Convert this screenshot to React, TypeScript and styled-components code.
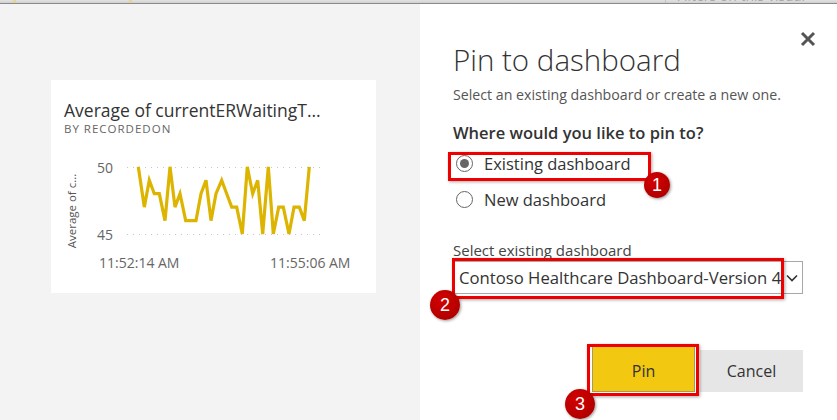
import React from "react";
import styled, { createGlobalStyle } from "styled-components";

const Global = createGlobalStyle`
  html, body { margin: 0; padding: 0; }
  body {
    width: 837px; height: 420px; overflow: hidden;
    font-family: "Open Sans", "Noto Sans", sans-serif;
    background: #f3f3f3;
  }
`;

const Page = styled.div`
  width: 837px;
  height: 420px;
  display: flex;
  flex-direction: column;
  background: #f3f3f3;
`;

const TopStrip = styled.div`
  height: 3px;
  flex: none;
  display: flex;
  background: linear-gradient(#e2e2e2, #cfcfcf);
  border-bottom: 1px solid #8a8a8a;
  overflow: hidden;
`;

const StripMark = styled.div<{ $w: number }>`
  width: ${(p) => p.$w}px;
  flex: none;
  border-left: 3px solid #e3d3a2;
`;

const StripText = styled.div`
  margin-left: auto;
  margin-right: 32px;
  padding-left: 11px;
  border-left: 1px solid #c4c4c4;
  font-size: 14px;
  line-height: 14px;
  margin-top: -11px;
  color: #a8a8a8;
  white-space: nowrap;
`;

const Body = styled.div`
  flex: 1;
  display: flex;
  min-height: 0;
`;

const LeftPane = styled.div`
  width: 420px;
  flex: none;
  padding: 76px 0 0 51px;
  box-sizing: border-box;
`;

const Card = styled.div`
  width: 325px;
  height: 213px;
  background: #fff;
  display: flex;
  flex-direction: column;
`;

const CardHeader = styled.div`
  padding: 19px 13px 0;
  height: 70px;
  box-sizing: border-box;
`;

const CardTitle = styled.div`
  font-size: 17.5px;
  line-height: 22px;
  color: #333;
  white-space: nowrap;
`;

const CardSub = styled.div`
  font-size: 11.5px;
  line-height: 16px;
  letter-spacing: 1px;
  color: #666;
`;

const ChartSvg = styled.svg`
  display: block;
  font-family: "Open Sans", "Noto Sans", sans-serif;
`;

const Dialog = styled.div`
  flex: 1;
  background: #fff;
  position: relative;
  display: flex;
  flex-direction: column;
  padding: 0 34px 0 33px;
`;

const CloseButton = styled.button`
  position: absolute;
  top: 27px;
  right: 21px;
  width: 16px;
  height: 16px;
  padding: 0;
  border: none;
  background: none;
  display: flex;
`;

const Title = styled.h1`
  margin: 36px 0 0;
  font-size: 29.5px;
  line-height: 40px;
  font-weight: 300;
  color: #333;
`;

const Subtitle = styled.p`
  margin: 6px 0 0;
  font-size: 14.2px;
  line-height: 18px;
  color: #555;
`;

const Question = styled.div`
  margin: 18px 0 0;
  font-size: 16.5px;
  line-height: 22px;
  font-weight: 600;
  color: #333;
`;

const RadioGroup = styled.div`
  display: flex;
  flex-direction: column;
  margin-top: 1px;
`;

const RadioRow = styled.label`
  display: flex;
  align-items: center;
  height: 36px;
  gap: 11px;
  padding-left: 3px;
  font-size: 16.5px;
  color: #333;
`;

const RadioCircle = styled.span<{ $checked?: boolean }>`
  width: 17px;
  height: 17px;
  box-sizing: border-box;
  border-radius: 50%;
  border: 1.5px solid #666;
  display: flex;
  align-items: center;
  justify-content: center;
  &::after {
    content: "";
    width: 9px;
    height: 9px;
    border-radius: 50%;
    background: ${(p) => (p.$checked ? "#666" : "transparent")};
  }
`;

const FieldLabel = styled.div`
  margin-top: 24px;
  font-size: 15px;
  line-height: 18px;
  color: #444;
`;

const SelectBox = styled.div`
  margin-top: 2px;
  height: 33px;
  box-sizing: border-box;
  border: 1px solid #a8a8a8;
  display: flex;
  align-items: center;
  padding: 0 4px 0 5px;
  font-size: 16.7px;
  color: #333;
  white-space: nowrap;
`;

const SelectText = styled.span`
  flex: 1;
`;

const ButtonRow = styled.div`
  display: flex;
  justify-content: flex-end;
  align-items: flex-end;
  gap: 5px;
  margin-top: 52px;
`;

const Button = styled.button<{ $primary?: boolean }>`
  width: 103px;
  height: ${(p) => (p.$primary ? 46 : 42)}px;
  border: none;
  box-shadow: ${(p) => (p.$primary ? "inset 0 0 0 1px #a99a5a" : "none")};
  background: ${(p) => (p.$primary ? "#f2c811" : "#e6e6e6")};
  color: #333;
  font-family: "Open Sans", "Noto Sans", sans-serif;
  font-size: 16px;
  padding: ${(p) => (p.$primary ? "4px 0 0" : "0")};
`;

const Highlight = styled.div<{ $l: number; $t: number; $w: number; $h: number }>`
  position: absolute;
  left: ${(p) => p.$l}px;
  top: ${(p) => p.$t}px;
  width: ${(p) => p.$w}px;
  height: ${(p) => p.$h}px;
  box-sizing: border-box;
  border: 3px solid #ee0000;
  box-shadow: 1px 1px 3px rgba(0, 0, 0, 0.35);
  pointer-events: none;
`;

const Badge = styled.div<{ $x: number; $y: number; $r: number }>`
  position: absolute;
  left: ${(p) => p.$x - p.$r}px;
  top: ${(p) => p.$y - p.$r}px;
  width: ${(p) => p.$r * 2}px;
  height: ${(p) => p.$r * 2}px;
  border-radius: 50%;
  background: radial-gradient(circle at 40% 35%, #d40000, #a30000);
  box-shadow: 1px 1px 3px rgba(0, 0, 0, 0.4);
  color: #fff;
  font-family: "Liberation Sans", Arial, sans-serif;
  font-size: 18px;
  display: flex;
  align-items: center;
  justify-content: center;
`;

const values = [50, 47, 49, 48, 48, 46, 50, 47, 48, 46, 46, 46, 48, 49, 46, 48, 49, 48, 47, 47, 45, 50, 48, 49, 45, 50, 45, 47, 47, 45, 47, 47, 46, 50];
const xs = [145, 163, 178, 193, 208, 225, 240, 255, 270, 287, 303, 318, 333, 348, 363, 378, 395, 410, 425, 440, 457, 472, 488, 503, 518, 535, 550, 566, 580, 597, 612, 628, 643, 658];

const points = values
  .map((v, i) => `${(39 + xs[i] / 3).toFixed(1)},${(16.8 + (50 - v) * 13.45).toFixed(1)}`)
  .join(" ");

const Chart = () => (
  <ChartSvg width={325} height={143} viewBox="0 0 325 143">
    <text transform="translate(25 61) rotate(-90)" textAnchor="middle" fontSize="11.5" fill="#555">
      Average of c...
    </text>
    <text x="62" y="22.5" textAnchor="end" fontSize="14" fill="#666">50</text>
    <text x="62" y="89.5" textAnchor="end" fontSize="14" fill="#666">45</text>
    <line x1="76" y1="17.5" x2="272" y2="17.5" stroke="#c8c8c8" strokeDasharray="1 5" />
    <line x1="76" y1="84.5" x2="272" y2="84.5" stroke="#c8c8c8" strokeDasharray="1 5" />
    <polyline points={points} fill="none" stroke="#ddb400" strokeWidth="3.2" strokeLinejoin="miter" />
    <text x="48" y="118" fontSize="14" fill="#666">11:52:14 AM</text>
    <text x="219" y="118" fontSize="14" fill="#666">11:55:06 AM</text>
  </ChartSvg>
);

export default function App() {
  return (
    <Page>
      <Global />
      <TopStrip>
        <StripMark $w={113} style={{ marginLeft: 13 }} />
        <StripMark $w={40} />
        <StripText>Filters on this visual</StripText>
      </TopStrip>
      <Body>
        <LeftPane>
          <Card>
            <CardHeader>
              <CardTitle>Average of currentERWaitingT...</CardTitle>
              <CardSub>BY RECORDEDON</CardSub>
            </CardHeader>
            <Chart />
          </Card>
        </LeftPane>
        <Dialog>
          <CloseButton aria-label="Close">
            <svg width="16" height="16" viewBox="0 0 16 16">
              <path d="M2 2 L14 14 M14 2 L2 14" stroke="#555" strokeWidth="3" />
            </svg>
          </CloseButton>
          <Title>Pin to dashboard</Title>
          <Subtitle>Select an existing dashboard or create a new one.</Subtitle>
          <Question>Where would you like to pin to?</Question>
          <RadioGroup>
            <RadioRow>
              <RadioCircle $checked />
              Existing dashboard
            </RadioRow>
            <RadioRow>
              <RadioCircle />
              New dashboard
            </RadioRow>
          </RadioGroup>
          <FieldLabel>Select existing dashboard</FieldLabel>
          <SelectBox>
            <SelectText>Contoso Healthcare Dashboard-Version 4</SelectText>
            <svg width="12" height="8" viewBox="0 0 12 8">
              <path d="M1 1.5 L6 6.5 L11 1.5" fill="none" stroke="#333" strokeWidth="1.6" />
            </svg>
          </SelectBox>
          <ButtonRow>
            <Button $primary>Pin</Button>
            <Button>Cancel</Button>
          </ButtonRow>
          <Highlight $l={28} $t={148} $w={203} $h={29} />
          <Badge $x={237} $y={181} $r={13}>1</Badge>
          <Highlight $l={32} $t={254} $w={332} $h={41} />
          <Badge $x={25} $y={301} $r={15}>2</Badge>
          <Highlight $l={167} $t={340} $w={112} $h={52} />
          <Badge $x={160} $y={400} $r={15}>3</Badge>
        </Dialog>
      </Body>
    </Page>
  );
}
